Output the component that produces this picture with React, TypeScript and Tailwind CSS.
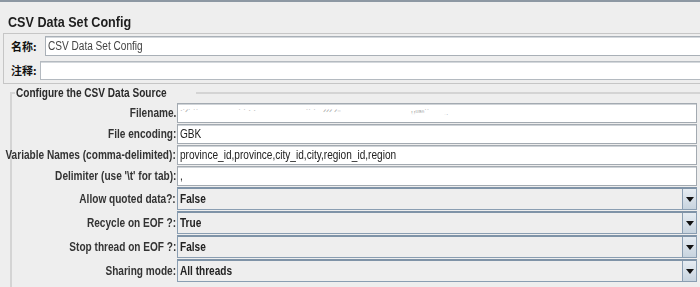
import React from "react";

const sans = "font-[family-name:'Liberation_Sans','Noto_Sans_CJK_SC',sans-serif]";
const cjk = "font-[family-name:'Noto_Sans_CJK_SC','Liberation_Sans',sans-serif]";

const textRows = [
  { label: "Filename.", value: "" },
  { label: "File encoding:", value: "GBK" },
  { label: "Variable Names (comma-delimited):", value: "province_id,province,city_id,city,region_id,region" },
  { label: "Delimiter (use '\\t' for tab):", value: "," },
];

const selectRows = [
  { label: "Allow quoted data?:", value: "False" },
  { label: "Recycle on EOF ?:", value: "True" },
  { label: "Stop thread on EOF ?:", value: "False" },
  { label: "Sharing mode:", value: "All threads" },
];

// the screenshot's font is a narrow one, squeeze Liberation Sans to match
function Narrow({ children, right }: { children: React.ReactNode; right?: boolean }) {
  return (
    <span
      className={`inline-block whitespace-nowrap scale-x-[0.84] ${right ? "origin-right" : "origin-left"}`}
    >
      {children}
    </span>
  );
}

function Arrow() {
  return (
    <svg width="8" height="5" viewBox="0 0 8 5">
      <polygon points="0,0 8,0 4,5" fill="#111" />
    </svg>
  );
}

function Label({ children }: { children: React.ReactNode }) {
  return (
    <span className="flex w-[165px] shrink-0 justify-end pr-[1px] text-[12px] font-bold text-[#333]">
      <Narrow right>{children}</Narrow>
    </span>
  );
}

export default function App() {
  return (
    <div className={`h-[287px] w-[700px] overflow-hidden border-t-2 border-[#8d98a3] bg-[#eeeeee] text-[#222] ${sans}`}>
      <div className="ml-2 mt-[10px] h-[20px] text-[15px] font-bold leading-[20px] text-[#1e1e1e]">
        <Narrow>CSV Data Set Config</Narrow>
      </div>

      {/* name / comment */}
      <div className="ml-[3px] mt-[1px] w-[720px] border border-r-0 border-[#c6c6c6] pb-[3px] pt-[2px]">
        <div className="flex h-[20px] items-center">
          <span className={`w-[41px] pl-[7px] text-[11px] font-bold text-[#111] ${cjk}`}>名称:</span>
          <div className="flex h-[20px] flex-1 items-center border border-r-0 border-[#a9b0b7] bg-white pl-[2px] text-[12px] text-[#444] shadow-[inset_0_1px_0_#d4d8dc]">
            <Narrow>CSV Data Set Config</Narrow>
          </div>
        </div>
        <div className="mt-[5px] flex h-[19px] items-center">
          <span className={`w-[36px] pl-[7px] text-[11px] font-bold text-[#111] ${cjk}`}>注释:</span>
          <div className="h-[19px] flex-1 border border-r-0 border-[#b4bac0] bg-white shadow-[inset_0_1px_0_#d4d8dc]" />
        </div>
      </div>

      {/* CSV data source */}
      <fieldset className="relative ml-[10px] mt-[2px] w-[700px] border-2 border-[#d4d4d4] pb-2 pr-[11px]">
        <legend className="ml-[3px] px-[1px] text-[12px] font-bold leading-[14px] text-[#2a2a2a]">
          <Narrow>Configure the CSV Data Source</Narrow>
        </legend>
        <div className="pt-[3px]">
          {textRows.map((r, i) => (
            <div key={r.label} className={`flex h-[20px] items-center ${i > 0 ? "mt-[1px]" : ""}`}>
              <Label>{r.label}</Label>
              <div className="relative flex h-[20px] flex-1 items-center overflow-hidden border border-[#a3aab1] bg-white pl-[2px] text-[12px] text-[#222] shadow-[inset_0_1px_0_#d0d4d8]">
                {r.value && <Narrow>{r.value}</Narrow>}
                {i === 0 && (
                  <span className="flex items-center text-[8px] text-[#9c9c9c]">
                    <span>ˊ˙ᐟ˙ ˙˙</span>
                    <span className="ml-[40px]">˙ ˙ ˊ ˊ</span>
                    <span className="ml-[50px]">˙˙ ˙ _ᐟᐟᐟ ᐟ⁻</span>
                    <span className="ml-[70px]">ɥᵘᵃⁿ˙˙</span>
                    <span className="ml-[14px]">..</span>
                  </span>
                )}
              </div>
            </div>
          ))}
          {selectRows.map((r) => (
            <div key={r.label} className="mt-[1px] flex h-[23px] items-center">
              <Label>{r.label}</Label>
              <div className="flex h-[23px] flex-1 items-stretch border border-[#8a9eb2] border-t-2 border-t-[#7f93a7] bg-[#eeeeee]">
                <span className="flex flex-1 items-center pl-[2px] text-[12px] font-bold text-[#222]">
                  <Narrow>{r.value}</Narrow>
                </span>
                <span className="flex w-[14px] items-center justify-center border-l border-[#8a9eb2] bg-gradient-to-b from-[#e6ecf2] to-[#c8d4df]">
                  <Arrow />
                </span>
              </div>
            </div>
          ))}
        </div>
        <div className="absolute left-[255px] top-[13px] h-[7px] w-[180px] rounded-full bg-white blur-[1px]" />
      </fieldset>
    </div>
  );
}
